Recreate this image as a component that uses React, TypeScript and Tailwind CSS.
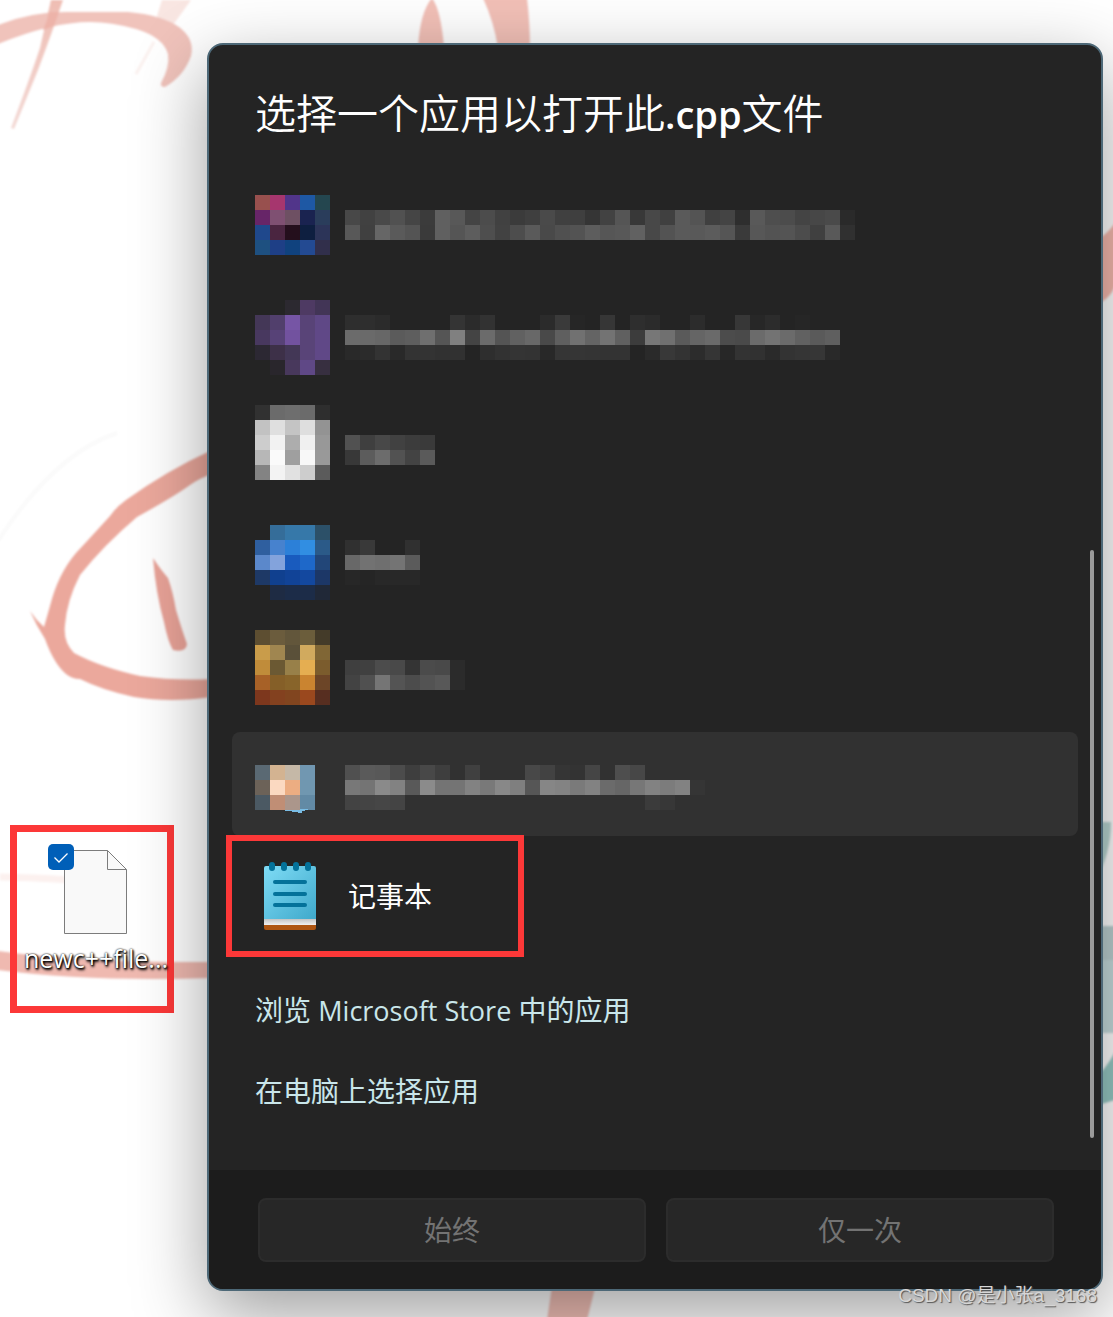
interface MosaicData {
  top: number;
  cells: string[];
}

interface AppItem {
  id: string;
  icon: MosaicData;
  label: MosaicData;
  active?: boolean;
}

const CELL = 15;

// "-" leaves a cell empty, two digits are a grey level, six are a full colour
const apps: AppItem[] = [
  {
    id: "应用 1",
    icon: {
      top: 23,
      cells: [
        "98504e a6366e 51358a 1e58a4 24464f",
        "672568 7f5072 6e5063 1a2350 2a3d5b",
        "1f488c 4a2540 240f1c 0e1f40 2c3458",
        "1e5080 1e3f86 10427e 234a92 312f4b",
      ],
    },
    label: {
      top: 38,
      cells: [
        "48 41 49 51 45 3b 60 58 44 4c 41 3b 3f 4a 40 3f 35 42 55 38 48 40 5a 54 40 44 2e 59 4e 4c 44 47 4a 2a",
        "58 40 66 5a 54 3a 60 55 5d 4e 42 4d 5a 49 50 53 5d 56 58 61 48 53 5a 59 5c 55 3a 57 53 54 4c 40 59 30",
      ],
    },
  },
  {
    id: "应用 2",
    icon: {
      top: 16,
      cells: [
        "- - 2c2930 4e3a63 423556",
        "443757 513f6c 7655a5 584377 5f4886",
        "48385f 574277 72529f 594478 604887",
        "2c2833 3d3048 433756 594478 604887",
        "- 29262c 48385c 5f4886 372f40",
      ],
    },
    label: {
      top: 31,
      cells: [
        "2e 2e 2b - - - - 34 2b 32 - - - 2b 3a 26 - 36 - 2e 2b - - 2c - - 37 27 2c - 26 - -",
        "6b 6a 67 5b 5e 6f 55 80 44 6b 54 61 68 49 5f 71 64 73 60 3c 77 70 5a 65 6a 4c 4a 6b 73 6b 61 5a 5f",
        "29 2b 33 29 33 33 31 31 - 2e 32 34 33 28 35 35 34 33 33 - 2a 38 33 2c 35 27 33 31 2a 33 35 36 29",
      ],
    },
  },
  {
    id: "应用 3",
    icon: {
      top: 9,
      cells: [
        "31 6b 6e 6b 2e",
        "c2 df c4 de 93",
        "cd f2 ad f0 98",
        "b7 fa 9f f8 99",
        "83 f3 e1 cd 5b",
      ],
    },
    label: {
      top: 39,
      cells: ["51 3f 48 41 3c 3a", "38 5c 6c 52 43 5a"],
    },
  },
  {
    id: "应用 4",
    icon: {
      top: 17,
      cells: [
        "- 356d99 3678a9 3678a9 2c5068",
        "2f5f9f 4782ce 2c80d8 318ee2 2b5a88",
        "5b88cb 83a3dc 195bbe 1e68c9 224678",
        "1e3966 10408f 114397 13489f 1c3767",
        "- 1e2b43 1c2c48 1c2c48 202837",
      ],
    },
    label: {
      top: 32,
      cells: ["30 39 - - 30", "68 72 6f 74 5b", "27 25 28 28 28"],
    },
  },
  {
    id: "应用 5",
    icon: {
      top: 10,
      cells: [
        "5d4e31 6b5c3d 62563b 6b5d3b 443b29",
        "c99c4a a08650 5a5039 d1aa5e 806635",
        "c08c3a 6b5933 988049 e5ae51 7b5c2d",
        "a76127 855f28 88642a ca8430 6c4527",
        "7d371d 83411f 81451f 9a481e 572e20",
      ],
    },
    label: {
      top: 40,
      cells: ["3f 40 4c 49 34 4b 49 2b", "43 50 75 54 4c 53 58 2b"],
    },
  },
  {
    id: "应用 6",
    active: true,
    icon: {
      top: 33,
      cells: [
        "5a6973 d3b391 c5b8a7 7197b1",
        "6c6258 fbd9c1 ecad82 7097b0",
        "4b5963 c08e75 ab968b 628aa5",
      ],
    },
    label: {
      top: 33,
      cells: [
        "50 5a 58 4c 3e 48 3e - 40 - - - 48 42 35 33 45 - 4e 47",
        "78 74 8a 82 59 8b 74 74 82 79 88 7f 56 86 83 7a 82 6b 66 77 82 7c 82 35",
        "43 44 46 44 - - - - - - - - - - - - - - - - 3b 37",
      ],
    },
  },
];

const toFill = (cell: string) => (cell.length === 2 ? `#${cell}${cell}${cell}` : `#${cell}`);

const Mosaic = ({ data, left = 0 }: { data: MosaicData; left?: number }) => (
  <g>
    {data.cells.map((line, row) =>
      line
        .split(" ")
        .map((cell, col) =>
          cell === "-" ? null : (
            <rect
              key={`${row}-${col}`}
              x={left + col * CELL}
              y={data.top + row * CELL}
              width={CELL}
              height={CELL}
              fill={toFill(cell)}
            />
          )
        )
    )}
  </g>
);

const AppRow = ({ item }: { item: AppItem }) => (
  <li>
    <button
      type="button"
      aria-label={item.id}
      className={
        item.active
          ? "flex h-[104px] w-full items-center rounded-lg bg-[#313131] pl-[23px]"
          : "flex h-[104px] w-full items-center rounded-lg pl-[23px]"
      }
    >
      <svg width="600" height="104" viewBox="0 0 600 104" shapeRendering="crispEdges" aria-hidden="true">
        <Mosaic data={item.icon} />
        <Mosaic data={item.label} left={90} />
        {item.active && (
          <path d="M30 78h15v-1h8v1h-3v1h-3v2h-4v-1h-6v-1h-7z" fill="#79bce4" />
        )}
      </svg>
    </button>
  </li>
);

const NotepadIcon = () => (
  <svg width="52" height="68" viewBox="0 0 52 68" aria-hidden="true">
    <defs>
      <linearGradient id="page" x1="0" y1="0" x2="1" y2="1">
        <stop offset="0" stopColor="#7fdcf6" />
        <stop offset="1" stopColor="#3fa9cb" />
      </linearGradient>
      <linearGradient id="edge" x1="0" y1="0" x2="0" y2="1">
        <stop offset="0" stopColor="#bcbcbc" />
        <stop offset="1" stopColor="#f0f0f0" />
      </linearGradient>
    </defs>
    <rect y="50" width="52" height="18" rx="2" fill="#ae5511" />
    <rect y="56" width="52" height="7" fill="url(#edge)" />
    <path d="M2 4h48a2 2 0 0 1 2 2v51H0V6a2 2 0 0 1 2-2z" fill="url(#page)" />
    <g fill="#04729a">
      <rect x="5" y="0" width="6" height="9" rx="3" />
      <rect x="17" y="0" width="6" height="9" rx="3" />
      <rect x="29" y="0" width="6" height="9" rx="3" />
      <rect x="41" y="0" width="6" height="9" rx="3" />
      <rect x="9" y="18" width="34" height="4" rx="2" />
      <rect x="9" y="30" width="34" height="4" rx="2" />
      <rect x="9" y="41" width="34" height="4" rx="2" />
    </g>
  </svg>
);

const Wallpaper = () => (
  <svg
    className="absolute top-0 left-0"
    width="1113"
    height="1317"
    viewBox="0 0 1113 1317"
    aria-hidden="true"
  >
    <defs>
      <linearGradient id="slash" x1="0" y1="0" x2="0" y2="1">
        <stop offset="0" stopColor="#efbdb3" />
        <stop offset="1" stopColor="#f3d9d5" />
      </linearGradient>
      <filter id="chalk">
        <feGaussianBlur stdDeviation="0.8" />
      </filter>
    </defs>
    <g filter="url(#chalk)">
      <path d="M162 0h29L168 32l-11-16z" fill="#f9e6e2" />
      <path d="M154 42L136 74" stroke="#fbf1ef" strokeWidth="3" />
      <path d="M51 0h12Q50 38 38 70L14 129l-3-1Q30 78 40 48z" fill="url(#slash)" />
      <path
        d="M-2 25Q30 12 66 12h62q34 3 51 15q16 12 12 29q-7 20-26 31q-5 0-4-4q9-16 7-29q-5-17-32-25q-25-7-46-7Q52 22-2 44z"
        fill="#f0c3bb"
      />
      <path d="M49 12q-2 10-6 18l11-4 5-14z" fill="#edb3a9" />
      <path d="M432-2q9 12 12 50h-26q2-36 14-50z" fill="#f2c0b7" />
      <path d="M483-2h44q3 26 3 50h-32q-4-26-15-50z" fill="#f2c0b7" />
      <path d="M-2 541Q54 454 117 433" stroke="#fafafa" strokeWidth="4" fill="none" />
      <path
        d="M212 450Q168 470 126 500Q116 507 110 516Q90 538 76 553Q58 574 50 606L44 627Q36 620 30 611Q36 625 45 639Q54 664 66 674Q72 679 80 679Q102 690 134 697Q170 703 212 697V679Q175 681 140 676Q100 667 74 653Q63 642 65 625Q67 600 80 575Q104 545 137 517Q175 496 190 485Q200 478 212 474z"
        fill="#eba89c"
      />
      <path d="M153 558q8 12 15 20q5 14 8 32q6 20 11 34q-1 9-14 6q-5-8-9-28q-8-28-11-64z" fill="#e9a398" />
      <path d="M0 877q50 1 80 4" stroke="#fcf1ef" strokeWidth="7" fill="none" />
      <path d="M-2 951q90 12 214 11v16q-120 4-214-8z" fill="#efb9b0" />
      <path d="M553 1280h44q-5 20-10 40h-40z" fill="#f2c0b7" />
      <path d="M1095 240q10-3 20-17v62q-4 14-20 20z" fill="#f6b9ae" />
      <path d="M1095 822h16q0 32-16 60z" fill="#b9d6d2" />
      <path d="M1095 926h20v107h-20z" fill="#c6dcdd" />
      <path d="M1095 926h20v34h-20z" fill="#bcd0d1" />
      <path d="M1095 1078q10-8 20-26v48l-20 6z" fill="#97c9c4" />
    </g>
  </svg>
);

const DesktopFile = () => (
  <label className="mt-[782px] ml-2.5 flex h-[188px] w-[164px] shrink-0 flex-col items-center self-start border-[7px] border-[#fc3838] pl-2">
    <span className="relative mt-[18px] block">
      <svg width="64" height="84" viewBox="0 0 64 84" aria-hidden="true">
        <path d="M.5 .5h43l19 19v64h-62z" fill="#f9f9f9" stroke="#7c7c7c" />
        <path d="M43.500 .5v19h19" fill="none" stroke="#7c7c7c" />
      </svg>
      <input
        type="checkbox"
        defaultChecked
        className="absolute -top-1.5 -left-4 size-[26px] appearance-none rounded-[5px] bg-[#005fb8]"
      />
      <svg className="pointer-events-none absolute -top-1.5 -left-4" width="26" height="26" viewBox="0 0 26 26" aria-hidden="true">
        <path d="M6.500 13.500l4.500 4.500 8.500-8.500" fill="none" stroke="#fff" strokeWidth="1.300" />
      </svg>
    </span>
    <span className="mt-2 text-[25px] leading-8 whitespace-nowrap text-white [text-shadow:0_0_2px_#000,1px_1px_2px_#000,1px_2px_3px_#000]">
      newc++file...
    </span>
  </label>
);

export default function App() {
  return (
    <main className="relative flex min-h-screen overflow-hidden bg-white pt-[43px] pr-2.5 pb-[26px] font-['Open_Sans','Noto_Sans_CJK_SC',sans-serif]">
      <Wallpaper />
      <div className="relative flex flex-1">
        <section
          role="dialog"
          aria-labelledby="dialog-title"
          className="order-2 ml-[33px] flex flex-1 flex-col overflow-hidden rounded-2xl border-2 border-[#4d6877] bg-[#242424] text-white shadow-[0_24px_72px_rgba(0,0,0,0.38)]"
        >
          <div className="relative flex-1 px-[23px]">
            <h1 id="dialog-title" className="pt-10 pb-[30px] pl-[23px] text-[41px] leading-[56px] font-[350]">
              选择一个应用以打开此<span className="text-[38px] font-semibold">.cpp</span>文件
            </h1>
            <ul className="flex flex-col gap-2">
              {apps.map((item) => (
                <AppRow key={item.id} item={item} />
              ))}
              <li className="relative">
                <button type="button" className="flex h-[104px] w-full items-center gap-8 rounded-lg pl-8 text-[28px]">
                  <NotepadIcon />
                  记事本
                </button>
                <div className="pointer-events-none absolute -top-[9px] -left-1.5 h-[122px] w-[298px] border-[6px] border-[#fc3838]" />
              </li>
            </ul>
            <nav className="mt-[22px] flex flex-col items-start pl-[23px] text-[28px] leading-[80px] text-[#c9e6ea]">
              <a href="#store">
                浏览 <span className="text-[27px]">Microsoft Store</span> 中的应用
              </a>
              <a href="#browse">在电脑上选择应用</a>
            </nav>
            <div className="absolute top-[505px] right-[7px] bottom-8 w-1 rounded-full bg-[#9b9b9b]" />
          </div>
          <footer className="flex gap-5 bg-[#1c1c1c] pt-7 pr-[47px] pb-[27px] pl-[49px] text-[28px] text-[#737373]">
            <button type="button" disabled className="h-16 flex-1 rounded-lg border-2 border-[#2c2c2c] bg-[#272727]">
              始终
            </button>
            <button type="button" disabled className="h-16 flex-1 rounded-lg border-2 border-[#2c2c2c] bg-[#272727]">
              仅一次
            </button>
          </footer>
        </section>
        <DesktopFile />
      </div>
      <p className="absolute right-4 bottom-1.5 font-['Liberation_Sans','Noto_Sans_CJK_SC',sans-serif] text-[19px] leading-[30px] text-[#d6d6d6] [text-shadow:1px_1px_1px_#555]">
        CSDN @是小张a_3168
      </p>
    </main>
  );
}
